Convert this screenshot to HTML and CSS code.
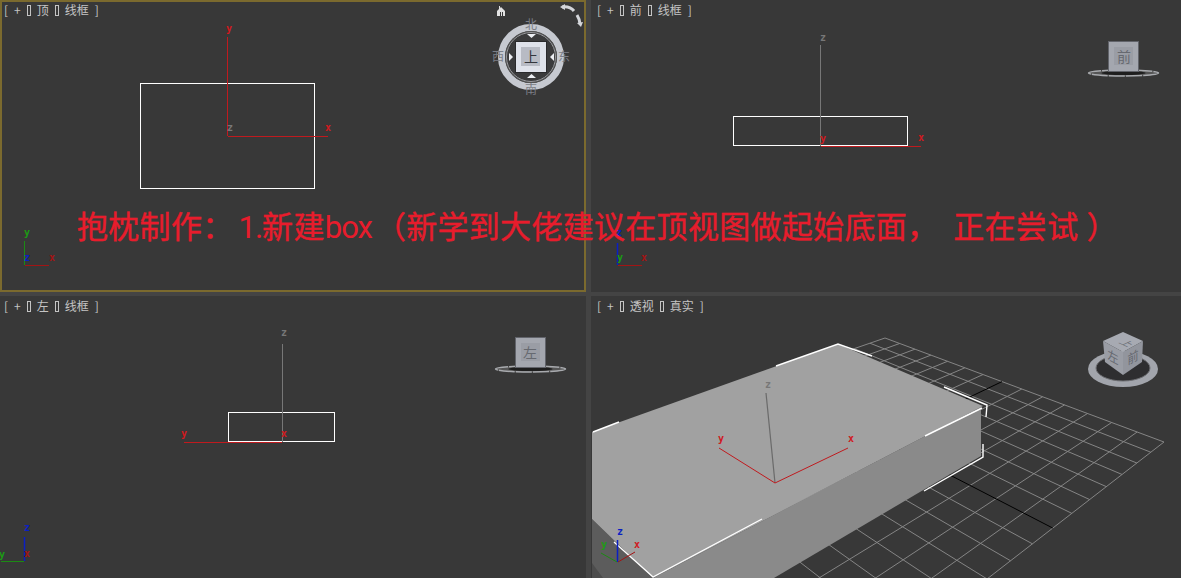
FILE: index.html
```html
<!DOCTYPE html>
<html lang="zh">
<head>
    <meta charset="UTF-8">
    <title>抱枕制作</title>
    <link rel="stylesheet" href="styles.css">
</head>
<body>
    <div class="stage">
        <div class="viewports">
            <!-- top -->
            <section class="viewport active">
                <div class="vp-label"><span>[</span><span>+</span><i class="tofu"></i><span>顶</span><i class="tofu"></i><span>线框</span><span>]</span></div>
                <svg class="scene" width="586" height="292">
                    <rect class="wire" x="140.5" y="83.5" width="174" height="105"/>
                    <line class="ax-red" x1="227.5" y1="37" x2="227.5" y2="136"/>
                    <line class="ax-red" x1="228" y1="136.5" x2="328" y2="136.5"/>
                    <text class="ax-txt t-red" x="226" y="32">y</text>
                    <text class="ax-txt t-gray" x="227" y="131">z</text>
                    <text class="ax-txt t-red" x="325" y="131">x</text>
                    <line class="ax-green" x1="24.5" y1="241" x2="24.5" y2="265"/>
                    <line class="ax-dred" x1="25" y1="265.5" x2="49" y2="265.5"/>
                    <text class="ax-txt t-green" x="24" y="236">y</text>
                    <text class="ax-txt t-blue" x="24" y="261">z</text>
                    <text class="ax-txt t-dred" x="49" y="261">x</text>
                    <!-- home + rotate arrows -->
                    <path fill="#e2e2e2" d="M497 16v-5l2-2v-3h1v2l1-1 4 4v5h-2v-4h-1v4h-1v-4h-1v4z"/>
                    <path class="arc" d="M562 7q8-1 12 4"/>
                    <path class="arc" d="M577 15q3 5 3 9"/>
                    <path fill="#d4d6da" d="M560 7l5-3v6zM581 27l-4-4 6-1z"/>
                    <!-- compass -->
                    <circle cx="531" cy="57" r="29.5" fill="none" stroke="#c6c9d0" stroke-width="7"/>
                    <circle cx="531" cy="57" r="25.500" fill="none" stroke="#555" stroke-width="1"/>
                    <circle cx="531" cy="57" r="24.500" fill="#3b3b3c" stroke="#9a9b9f" stroke-width="1"/>
                    <rect x="515.500" y="41.500" width="31" height="31" fill="#dfe2ea" stroke="#2a2a2c"/>
                    <rect x="521" y="47" width="19" height="19" fill="#b8bbc4"/>
                    <text class="cube-txt c-dark" x="531" y="62">上</text>
                    <path fill="#eceef2" d="M527 34h9l-4.500 4zM527 78h9l-4.500-4zM509 53v8l4-4zM554 53v8l-4-4z"/>
                    <text class="cube-txt compass c-mid" x="531" y="29">北</text>
                    <text class="cube-txt compass c-mid" x="531" y="94">南</text>
                    <text class="cube-txt compass c-mid" x="498" y="61">西</text>
                    <text class="cube-txt compass c-mid" x="564" y="61">东</text>
                </svg>
            </section>

            <!-- front -->
            <section class="viewport">
                <div class="vp-label"><span>[</span><span>+</span><i class="tofu"></i><span>前</span><i class="tofu"></i><span>线框</span><span>]</span></div>
                <svg class="scene" width="590" height="292">
                    <rect class="wire" x="142.500" y="116.500" width="174" height="29"/>
                    <line class="ax-gray" x1="229.500" y1="45" x2="229.500" y2="146"/>
                    <line class="ax-red" x1="230" y1="146.500" x2="330" y2="146.500"/>
                    <text class="ax-txt t-gray" x="229" y="41">z</text>
                    <text class="ax-txt t-red" x="229" y="142">y</text>
                    <text class="ax-txt t-red" x="327" y="141">x</text>
                    <line class="ax-blue" x1="26.500" y1="243" x2="26.500" y2="265"/>
                    <line class="ax-dred" x1="27" y1="265.500" x2="51" y2="265.500"/>
                    <text class="ax-txt t-blue" x="25" y="236">z</text>
                    <text class="ax-txt t-green" x="26" y="261">y</text>
                    <text class="ax-txt t-dred" x="50" y="261">x</text>
                    <ellipse class="ring" cx="532.500" cy="73" rx="35" ry="3"/>
                    <ellipse class="shade" cx="532.500" cy="73" rx="22" ry="2"/>
                    <rect class="cube" x="517.500" y="41.500" width="30" height="30"/>
                    <rect class="cube-in" x="523" y="47" width="19" height="18"/>
                    <text class="cube-txt c-cube" x="533" y="62">前</text>
                </svg>
            </section>

            <!-- left -->
            <section class="viewport">
                <div class="vp-label"><span>[</span><span>+</span><i class="tofu"></i><span>左</span><i class="tofu"></i><span>线框</span><span>]</span></div>
                <svg class="scene" width="586" height="282">
                    <rect class="wire" x="228.500" y="116.500" width="106" height="29"/>
                    <line class="ax-gray" x1="282.500" y1="48" x2="282.500" y2="146"/>
                    <line class="ax-red" x1="184" y1="146.500" x2="282" y2="146.500"/>
                    <text class="ax-txt t-gray" x="281" y="40">z</text>
                    <text class="ax-txt t-red" x="181" y="141">y</text>
                    <text class="ax-txt t-red" x="281" y="141">x</text>
                    <line class="ax-blue" x1="24.500" y1="241" x2="24.500" y2="265"/>
                    <line class="ax-green" x1="1" y1="265.500" x2="24" y2="265.500"/>
                    <text class="ax-txt t-blue" x="24" y="235">z</text>
                    <text class="ax-txt t-green" x="-1" y="262">y</text>
                    <text class="ax-txt t-dred" x="24" y="261">x</text>
                    <ellipse class="ring" cx="530.500" cy="73" rx="35" ry="3"/>
                    <ellipse class="shade" cx="530.500" cy="73" rx="22" ry="2"/>
                    <rect class="cube" x="515.500" y="41.500" width="30" height="30"/>
                    <rect class="cube-in" x="521" y="47" width="19" height="18"/>
                    <text class="cube-txt c-cube" x="530" y="62">左</text>
                </svg>
            </section>

            <!-- perspective -->
            <section class="viewport">
                <div class="vp-label"><span>[</span><span>+</span><i class="tofu"></i><span>透视</span><i class="tofu"></i><span>真实</span><span>]</span></div>
                <svg class="scene" width="590" height="282">
                    <g id="grid"></g>
                    <polygon fill="#5c5c5c" points="1,223 62,282 1,282"/>
                    <polygon fill="#4c4c4c" points="1,267 12,282 1,282"/>
                    <polygon fill="#8a8a8a" points="390,111 390,160 183,282 62,282"/>
                    <polygon fill="#a1a1a1" points="1,136 247,48 392,110 62,282 1,223"/>
                    <polyline class="white" points="2,136 28,126"/>
                    <polyline class="white" points="185,70 247,48 281,60"/>
                    <polyline class="white" points="353,91 396,109 395,121"/>
                    <polyline class="white" points="391,112 334,140"/>
                    <polyline class="white" points="392,148 392,161 333,195"/>
                    <polyline class="white" points="171,223 62,281 23,246"/>
                    <line class="ax-gray2" x1="175" y1="97" x2="184" y2="187"/>
                    <line class="ax-red" x1="128" y1="152" x2="184" y2="187"/>
                    <line class="ax-red" x1="184" y1="187" x2="257" y2="152"/>
                    <text class="ax-txt t-gray" x="174" y="92">z</text>
                    <text class="ax-txt t-red" x="127" y="146">y</text>
                    <text class="ax-txt t-red" x="257" y="146">x</text>
                    <line class="ax-blue" x1="26.500" y1="244" x2="26.500" y2="266"/>
                    <line class="ax-green" x1="10" y1="257" x2="26" y2="266"/>
                    <line class="ax-dred" x1="27" y1="266" x2="44" y2="256"/>
                    <text class="ax-txt t-blue" x="26" y="239">z</text>
                    <text class="ax-txt t-green" x="10" y="252">y</text>
                    <text class="ax-txt t-red" x="43" y="252">x</text>
                    <!-- view cube -->
                    <ellipse cx="532" cy="73" rx="35" ry="18" fill="#a2a5ac"/>
                    <ellipse cx="532" cy="72" rx="27" ry="13" fill="#2e2e30" stroke="#6d6e72"/>
                    <polygon fill="#a7aab2" points="532,36 552,45 532,56 512,45"/>
                    <polygon fill="#9a9da5" points="512,45 532,56 532,79 514,66"/>
                    <polygon fill="#92959d" points="532,56 552,45 551,66 532,79"/>
                    <text class="cube-txt small c-cube" transform="matrix(.75 .34 -.75 .34 532 49)">上</text>
                    <text class="cube-txt small c-cube" transform="matrix(.85 .45 0 1 522 66)">左</text>
                    <text class="cube-txt small c-cube" transform="matrix(.85 -.45 0 1 542 66)">前</text>
                </svg>
            </section>
        </div>
        <div class="caption">抱枕制作： <span class="latin">1.</span>新建<span class="latin">box</span><span class="open">（</span>新学到大佬建议在顶视图做起始底面，   正在尝试<span class="close">）</span></div>
    </div>
    <script src="grid.js"></script>
</body>
</html>
```

FILE: styles.css
```css
body {
    margin: 0;
    background-color: #444;
    overflow: hidden;
}

.stage {
    position: relative;
    width: 1181px;
    height: 578px;
}

.viewports {
    display: grid;
    grid-template-columns: 586px 590px;
    grid-template-rows: 292px 282px;
    column-gap: 5px;
    row-gap: 4px;
}

.viewport {
    position: relative;
    background-color: #383838;
    overflow: hidden;
}

.viewport.active::after {
    content: "";
    position: absolute;
    inset: 0;
    border: 2px solid #7b6a2e;
}

.vp-label {
    position: absolute;
    top: 2px;
    left: 4px;
    display: flex;
    align-items: center;
    gap: 6px;
    font-family: "Noto Sans CJK SC", sans-serif;
    font-size: 12px;
    line-height: 16px;
    color: #c4c4c4;
    white-space: nowrap;
}

.viewport:nth-child(even) .vp-label {
    left: 6px;
}

.tofu {
    width: 2px;
    height: 9px;
    border: 1px solid #c4c4c4;
}

.scene {
    display: block;
}

.wire {
    fill: none;
    stroke: #fff;
}

.white {
    fill: none;
    stroke: #fff;
    stroke-width: 1.4;
}

.ax-red { stroke: #c01a1e; }
.ax-dred { stroke: #a31414; }
.ax-green { stroke: #1c8a14; }
.ax-blue { stroke: #0a1fc4; stroke-width: 1.500; }
.ax-gray { stroke: #777; }
.ax-gray2 { stroke: #6a6a6a; stroke-width: 1.200; }

.ax-txt {
    font-family: "DejaVu Sans Mono", monospace;
    font-size: 10px;
    font-weight: bold;
}

.t-red { fill: #d01a1f; }
.t-dred { fill: #a31414; }
.t-green { fill: #1c9a14; }
.t-blue { fill: #0a1fc4; }
.t-gray { fill: #777; }

.arc {
    fill: none;
    stroke: #d4d6da;
    stroke-width: 3;
}

.ring {
    fill: #555;
    stroke: #a8aaae;
    stroke-width: 1.500;
    stroke-dasharray: 16 1;
}

.shade {
    fill: #1e1e1e;
}

.cube {
    fill: #a4a7af;
    stroke: #62646b;
}

.cube-in {
    fill: #9a9da5;
}

.cube-txt {
    font-family: "Noto Sans CJK SC", sans-serif;
    font-size: 14px;
    text-anchor: middle;
}

.cube-txt.compass {
    font-size: 12px;
}

.cube-txt.small {
    font-size: 13px;
}

.c-dark { fill: #34363c; }
.c-mid { fill: #7b7e86; }
.c-cube { fill: #666970; }

.caption {
    position: absolute;
    left: 77px;
    top: 208px;
    font-family: Roboto, "Noto Sans CJK SC", sans-serif;
    font-size: 31px;
    line-height: 40px;
    letter-spacing: 0.3px;
    word-spacing: -3px;
    color: #e81c2c;
    -webkit-text-stroke: 0.4px #e81c2c;
    white-space: pre;
}

.latin {
    letter-spacing: -1px;
    -webkit-text-stroke: 0;
}

.open {
    margin-left: 3px;
}

.close {
    margin-left: 8px;
}

.line-grid {
    stroke: #858585;
    stroke-width: 1;
}

.line-center {
    stroke: #000;
    stroke-width: 1;
}
```

FILE: grid.js
```js
// perspective ground grid, corners in viewport coordinates
var T = [294, 42], R = [573, 146], B = [281, 372], L = [7, 141];
var CELLS = 14;

function solve(a, b) {
    var n = a.length;
    for (var i = 0; i < n; i++) {
        var p = i;
        for (var r = i + 1; r < n; r++) {
            if (Math.abs(a[r][i]) > Math.abs(a[p][i])) p = r;
        }
        var t = a[i]; a[i] = a[p]; a[p] = t;
        t = b[i]; b[i] = b[p]; b[p] = t;
        for (var k = i + 1; k < n; k++) {
            var f = a[k][i] / a[i][i];
            for (var c = i; c < n; c++) a[k][c] -= f * a[i][c];
            b[k] -= f * b[i];
        }
    }
    var x = [];
    for (var i = n - 1; i >= 0; i--) {
        var s = b[i];
        for (var c = i + 1; c < n; c++) s -= a[i][c] * x[c];
        x[i] = s / a[i][i];
    }
    return x;
}

var src = [[0, 0], [1, 0], [1, 1], [0, 1]];
var dst = [T, R, B, L];
var A = [], Y = [];
for (var i = 0; i < 4; i++) {
    var u = src[i][0], v = src[i][1], x = dst[i][0], y = dst[i][1];
    A.push([u, v, 1, 0, 0, 0, -u * x, -v * x]); Y.push(x);
    A.push([0, 0, 0, u, v, 1, -u * y, -v * y]); Y.push(y);
}
var h = solve(A, Y);

function project(u, v) {
    var w = h[6] * u + h[7] * v + 1;
    return [(h[0] * u + h[1] * v + h[2]) / w, (h[3] * u + h[4] * v + h[5]) / w];
}

var g = document.getElementById("grid");
function addLine(p, q, cls) {
    var l = document.createElementNS("http://www.w3.org/2000/svg", "line");
    l.setAttribute("x1", p[0]); l.setAttribute("y1", p[1]);
    l.setAttribute("x2", q[0]); l.setAttribute("y2", q[1]);
    l.setAttribute("class", cls);
    g.appendChild(l);
}

for (var n = 0; n <= CELLS; n++) {
    if (n === CELLS / 2) continue;
    addLine(project(n / CELLS, 0), project(n / CELLS, 1), "line-grid");
    addLine(project(0, n / CELLS), project(1, n / CELLS), "line-grid");
}
addLine(project(0.5, 0), project(0.5, 1), "line-center");
addLine(project(0, 0.5), project(1, 0.5), "line-center");
```
